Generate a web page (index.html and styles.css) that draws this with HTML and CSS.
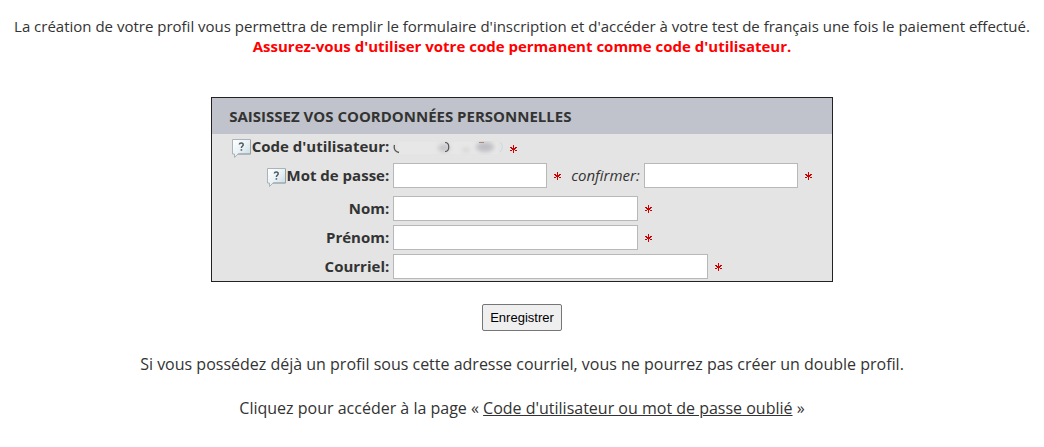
FILE: index.html
```html
<!DOCTYPE html>
<html lang="fr">
<head>
  <meta charset="UTF-8" />
  <title>Création de profil</title>
  <link rel="stylesheet" href="styles.css">
</head>
<body>
  <!-- shared icons -->
  <svg class="sprite" aria-hidden="true">
    <defs>
      <linearGradient id="bubble" x1="0" y1="0" x2="1" y2="1">
        <stop offset="0" stop-color="#ffffff" />
        <stop offset="0.5" stop-color="#eaf2f5" />
        <stop offset="1" stop-color="#c3d9e2" />
      </linearGradient>
      <filter id="soft" x="-50%" y="-50%" width="200%" height="200%">
        <feGaussianBlur stdDeviation="2" />
      </filter>
      <symbol id="help" viewBox="0 0 20 20">
        <path d="M1.500 1.500h18v14.500H7L3.500 19.500V16h-2z" fill="url(#bubble)" stroke="#a9b4b9" />
        <path d="M19.500 2v14H7" fill="none" stroke="#93a2a9" />
        <path d="M8.300 6.500C8.500 4.600 12.200 4.500 12.200 6.800C12.200 8.300 10.400 8.300 10.400 10" fill="none" stroke="#4c5963" stroke-width="1.500" />
        <path d="M9.600 11.200h1.600v1.500H9.600z" fill="#4c5963" />
      </symbol>
      <symbol id="star" viewBox="0 0 7 8">
        <path d="M3 0h1v8H3zM0 2h2v1H0zM5 2h2v1H5zM1 3h5v1H1zM2 4h3v1H2zM0 5h2v1H0zM5 5h2v1H5z" fill="#c00" />
      </symbol>
    </defs>
  </svg>

  <p class="intro">
    La création de votre profil vous permettra de remplir le formulaire d'inscription et d'accéder à votre test de français une fois le paiement effectué.<br>
    <strong>Assurez-vous d'utiliser votre code permanent comme code d'utilisateur.</strong>
  </p>

  <form>
    <div class="panel">
      <h1>SAISISSEZ VOS COORDONNÉES PERSONNELLES</h1>
      <div class="fields">
        <div class="row row-code">
          <span class="label"><svg class="help"><use href="#help" /></svg>Code d'utilisateur:</span>
          <svg class="masked" viewBox="0 0 110 14" role="img" aria-label="Code masqué">
            <rect x="5" y="1" width="100" height="12" fill="#e7e7e7" />
            <g filter="url(#soft)">
              <ellipse cx="51" cy="7" rx="6" ry="4" fill="#c6c6ca" />
              <ellipse cx="92" cy="6" rx="9" ry="5" fill="#bebec4" />
              <ellipse cx="73" cy="9" rx="4" ry="2" fill="#d3d3d3" />
            </g>
            <path d="M1.500 4C0.500 8 2 10.500 6 11.500" fill="none" stroke="#555" stroke-width="1.300" />
            <path d="M52 1.500C57 1.500 57 10.500 52 10.500" fill="none" stroke="#555" stroke-width="1.200" />
            <path d="M86 1.500h5" fill="none" stroke="#a68d82" />
            <path d="M107 1c3 3 3 7 0 10" fill="none" stroke="#c5d9e4" />
          </svg>
          <svg class="star"><use href="#star" /></svg>
        </div>
        <div class="row row-password">
          <label class="label" for="password"><svg class="help"><use href="#help" /></svg>Mot de passe:</label>
          <input type="password" id="password" class="short" required>
          <svg class="star"><use href="#star" /></svg>
          <label class="confirm" for="confirm">confirmer:</label>
          <input type="password" id="confirm" class="short" required>
          <svg class="star"><use href="#star" /></svg>
        </div>
        <div class="row">
          <label class="label" for="nom">Nom:</label>
          <input type="text" id="nom" class="medium" required>
          <svg class="star"><use href="#star" /></svg>
        </div>
        <div class="row">
          <label class="label" for="prenom">Prénom:</label>
          <input type="text" id="prenom" class="medium" required>
          <svg class="star"><use href="#star" /></svg>
        </div>
        <div class="row">
          <label class="label" for="courriel">Courriel:</label>
          <input type="email" id="courriel" class="long" required>
          <svg class="star"><use href="#star" /></svg>
        </div>
      </div>
    </div>
    <button type="submit">Enregistrer</button>
  </form>

  <p class="note">Si vous possédez déjà un profil sous cette adresse courriel, vous ne pourrez pas créer un double profil.</p>
  <p class="note">Cliquez pour accéder à la page « <a href="#">Code d'utilisateur ou mot de passe oublié</a> »</p>
</body>
</html>
```
FILE: styles.css
```css
body {
  margin: 0; padding: 16px 8px;
  background: white; color: #333;
  font: 15px/20px "Open Sans", sans-serif;
  text-align: center;
}
.sprite { position: absolute; width: 0; height: 0; }
.intro { margin: 0 0 41px; }
.intro strong { color: #f00; }

form { display: flex; flex-direction: column; align-items: center; }
.panel {
  box-sizing: border-box;
  border: 1px solid #222; background: #e4e4e4;
  text-align: left;
}
.panel h1 {
  margin: 0; padding: 8px 17px;
  background: #c0c3cc;
  font-size: 15px; line-height: 20px;
}
.fields {
  display: flex; flex-direction: column; gap: 4px;
  padding: 0 20px 2px 0;
}
.row { display: flex; align-items: center; height: 25px; }
.row-password { margin-bottom: 4px; }
.label {
  display: flex; justify-content: flex-end; align-items: center;
  width: 177px; height: 20px;
  margin-right: 4px; padding-bottom: 1px;
  font-weight: bold; white-space: nowrap;
}
.confirm { margin: 0 4px 0 10px; padding-bottom: 1px; font-style: italic; }
.help { width: 20px; height: 20px; margin: 4px 1px 0 0; }
.star { width: 7px; height: 8px; margin: 1px 0 0 7px; }
.row-code .star { margin-top: 5px; }
.masked { width: 110px; height: 14px; margin-top: 2px; }

input {
  box-sizing: border-box;
  height: 25px; padding: 2px 4px;
  border: 1px solid #b8b8b8; background: white;
  font: inherit;
}
.short { width: 154px; }
.medium { width: 245px; }
.long { width: 315px; }

button {
  margin-top: 22px; padding: 5px 7px;
  border: 1px solid #767676; border-radius: 2px;
  background: #efefef; color: black;
  font: 13px/15px "Liberation Sans", Arial, sans-serif;
  cursor: pointer;
}
.note { margin: 22px 0; font-size: 16px; line-height: 22px; }
.note a { color: #333; }
```
